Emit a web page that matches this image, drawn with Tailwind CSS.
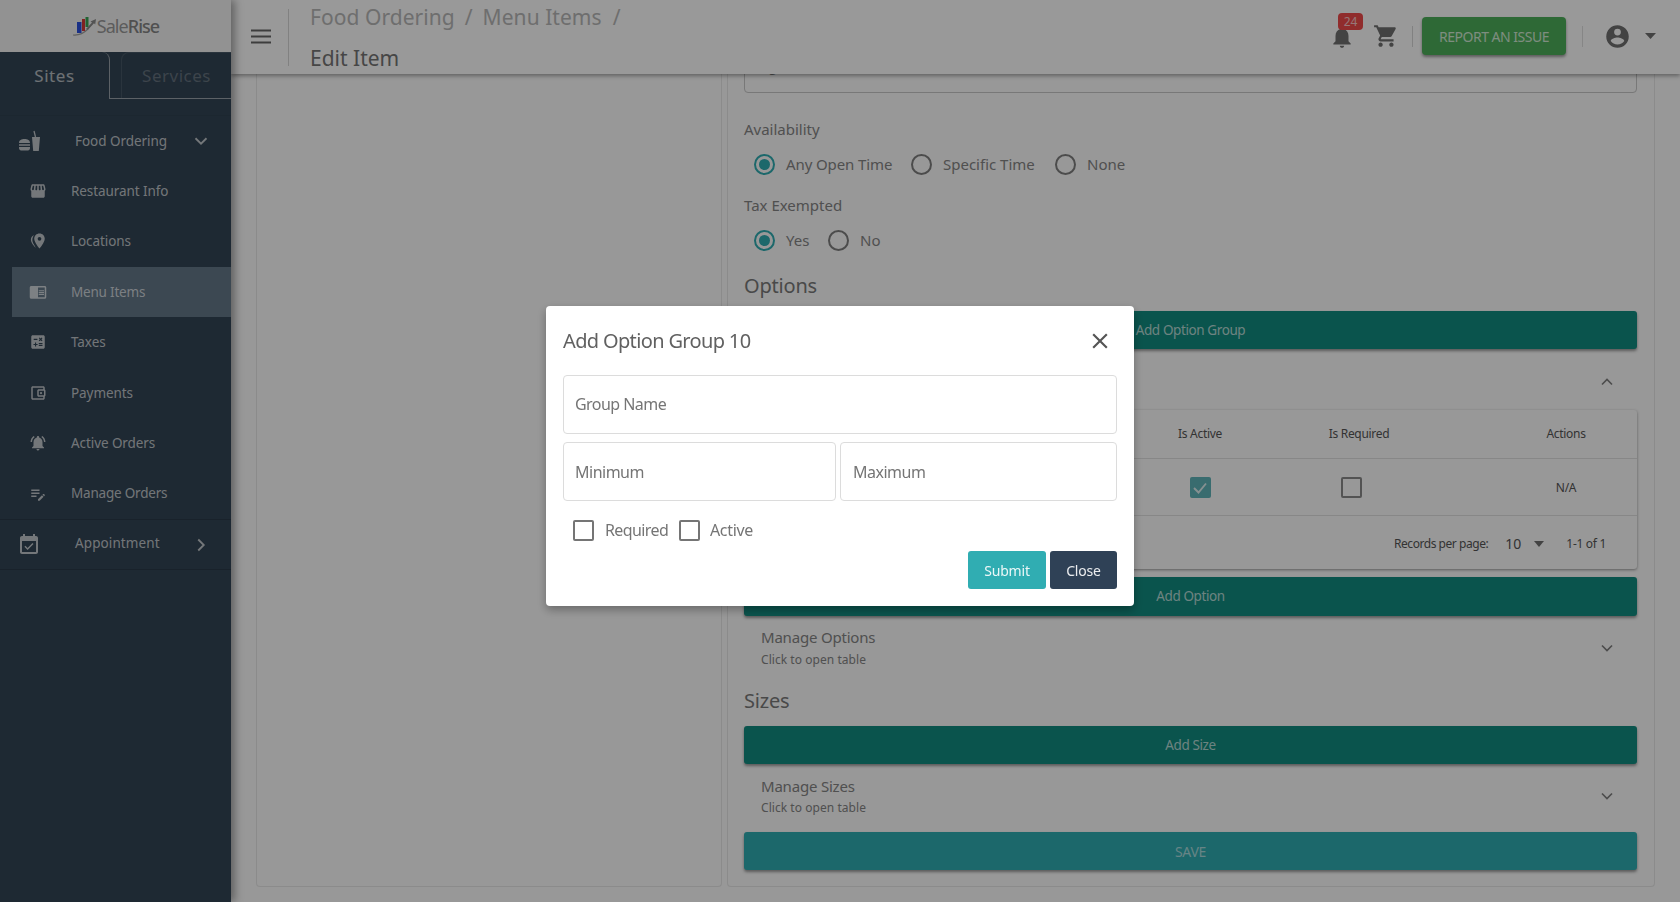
<!DOCTYPE html>
<html lang="en">
<head>
<meta charset="UTF-8">
<title>Edit Item</title>
<script src="https://cdn.jsdelivr.net/npm/@tailwindcss/browser@4"></script>
</head>
<body class="h-[902px] overflow-hidden bg-[#fdfdfd] font-['Noto_Sans',sans-serif] text-[#858585]">
<div class="flex h-[902px]">
  <!-- sidebar -->
  <aside class="relative z-20 flex w-[231px] shrink-0 flex-col bg-[#334555] text-white/70 shadow-[4px_0_8px_rgba(0,0,0,0.35)]">
    <div class="flex h-[52px] items-center justify-center bg-[#f4f4f4] pl-[1px]">
      <svg class="h-[20px] w-[24px]" viewBox="0 0 24 20">
        <path d="M0 19c5 .5 10-1 15-6" fill="none" stroke="#a0a0a0" stroke-width="1.2"/>
        <rect x="4" y="6" width="4.500" height="11" fill="#2b50e0"/>
        <rect x="9" y="3" width="3" height="12" fill="#d63a3a"/>
        <rect x="12.500" y="1" width="3" height="10" fill="#3aa655"/>
        <path d="M13 13l6-6.500-1.500-1L23 3l-.8 5.500-1.200-1.200-6 6.500z" fill="#8a8a8a"/>
      </svg>
      <span class="text-[18px] tracking-[-0.95px] text-[#999]">Sale<span class="font-medium text-[#858585]">Rise</span></span>
    </div>
    <div class="flex h-[47px] items-stretch">
      <div class="flex w-[110px] items-center justify-center rounded-tr-lg border-r border-white/50 text-[17px] tracking-[0.6px] text-white/65">Sites</div>
      <div class="flex flex-1 items-end border-b border-white/50 pl-[11px]">
        <div class="flex h-[46px] w-full items-center justify-center rounded-tl-lg border-l border-t border-white/10 text-[17px] tracking-[0.5px] text-white/25">Services</div>
      </div>
    </div>
    <div class="mt-[16px] flex h-[50.500px] items-center border-t border-black/5 text-[13.500px] tracking-[-0.05px]">
      <svg class="ml-[19px] h-[22px] w-[22px] fill-current" viewBox="0 0 22 22">
        <path d="M0 13c0-3 2.500-4 5.500-4s5.500 1 5.500 4zM0 14.200h11v1.600H0zM0 17h11v1c0 1.500-1 2.500-2 2.500H2c-1 0-2-1-2-2.500zM13 7h8l-1.200 14h-5.600z"/>
        <path d="M15 1l1.500 6" fill="none" stroke="currentColor" stroke-width="1.300"/>
      </svg>
      <span class="ml-[34px]">Food Ordering</span>
      <svg class="ml-auto mr-[19px] h-[22px] w-[22px] fill-none stroke-current stroke-2" viewBox="0 0 24 24"><path d="M6 9l6 6 6-6"/></svg>
    </div>
    <div class="flex h-[50.500px] items-center pl-[12px] text-[13.500px] tracking-[-0.08px]">
      <svg class="ml-[17px] h-[18px] w-[18px] fill-current" viewBox="0 0 24 24"><path d="M5 3h14c1 0 1.700.6 1.900 1.500l1 4.400c.3 1.200-.1 2.300-.9 3.100v7c0 1.100-.9 2-2 2H5c-1.100 0-2-.9-2-2v-7c-.8-.8-1.200-1.900-.9-3.100l1-4.400C3.300 3.600 4 3 5 3zm.1 2L4 9.400c-.1.8.4 1.600 1.200 1.600.6 0 1.200-.5 1.300-1.100L7 5H5.100zM9 5l-.5 4.500c-.1.800.5 1.500 1.300 1.500.7 0 1.200-.6 1.200-1.300V5H9zm4 0v4.700c0 .7.500 1.300 1.200 1.300.8 0 1.400-.7 1.300-1.500L15 5h-2zm4 0l.5 4.900c.1.600.7 1.100 1.300 1.100.8 0 1.300-.8 1.200-1.600L18.900 5H17z" fill-rule="evenodd"/></svg>
      <span class="ml-[24px]">Restaurant Info</span>
    </div>
    <div class="flex h-[50.500px] items-center pl-[12px] text-[13.500px] tracking-[-0.08px]">
      <svg class="ml-[17px] h-[18px] w-[18px] fill-current" viewBox="0 0 24 24"><path fill-rule="evenodd" d="M14 2c-4 0-7 3-7 7 0 5 7 13 7 13s7-8 7-13c0-4-3-7-7-7zm0 9.500a2.500 2.500 0 1 1 0-5 2.500 2.500 0 0 1 0 5z"/><path d="M6.500 4C4 5.500 2.500 7.500 2.500 10c0 3.500 3.500 8.500 6.500 11-1-2.500-5-7-4.500-11 .2-1.700.8-3.500 2-6z"/></svg>
      <span class="ml-[24px]">Locations</span>
    </div>
    <div class="ml-[12px] flex h-[50.500px] items-center bg-[#647889] text-[13.500px] tracking-[-0.2px]">
      <svg class="ml-[17px] h-[18px] w-[18px] fill-current" viewBox="0 0 24 24"><path d="M13 12h7v1.500h-7zm0-2.500h7V11h-7zm0 5h7V16h-7zM21 4H3c-1.100 0-2 .9-2 2v13c0 1.100.9 2 2 2h18c1.100 0 2-.9 2-2V6c0-1.100-.9-2-2-2zm0 15h-9V6h9v13z"/></svg>
      <span class="ml-[24px]">Menu Items</span>
    </div>
    <div class="flex h-[50.500px] items-center pl-[12px] text-[13.500px] tracking-[-0.08px]">
      <svg class="ml-[17px] h-[18px] w-[18px] fill-current" viewBox="0 0 24 24"><path d="M19 3H5c-1.100 0-2 .9-2 2v14c0 1.100.9 2 2 2h14c1.100 0 2-.9 2-2V5c0-1.100-.9-2-2-2zm-5.970 4.060L14.090 6l1.410 1.410L16.910 6l1.060 1.060-1.410 1.410 1.410 1.410-1.060 1.060-1.410-1.400-1.410 1.410-1.060-1.060 1.410-1.410-1.410-1.420zm-6.780.66h5v1.500h-5v-1.500zM11.500 16h-2v2H8v-2H6v-1.500h2v-2h1.500v2h2V16zm6.500 1.250h-5v-1.500h5v1.500zm0-2.500h-5v-1.500h5v1.500z"/></svg>
      <span class="ml-[24px]">Taxes</span>
    </div>
    <div class="flex h-[50.500px] items-center pl-[12px] text-[13.500px] tracking-[-0.08px]">
      <svg class="ml-[17px] h-[18px] w-[18px] fill-current" viewBox="0 0 24 24"><path d="M21 7.280V5c0-1.100-.9-2-2-2H5c-1.110 0-2 .9-2 2v14c0 1.100.89 2 2 2h14c1.100 0 2-.9 2-2v-2.280c.59-.35 1-.98 1-1.720V9c0-.74-.41-1.370-1-1.720zM20 9v6h-7V9h7zM5 19V5h14v2h-6c-1.100 0-2 .9-2 2v6c0 1.100.9 2 2 2h6v2H5z"/><circle cx="16" cy="12" r="1.500"/></svg>
      <span class="ml-[24px]">Payments</span>
    </div>
    <div class="flex h-[50.500px] items-center pl-[12px] text-[13.500px] tracking-[-0.08px]">
      <svg class="ml-[17px] h-[18px] w-[18px] fill-current" viewBox="0 0 24 24"><path d="M7.580 4.080L6.150 2.650C3.750 4.480 2.170 7.300 2.030 10.500h2c.15-2.650 1.510-4.970 3.550-6.420zm12.390 6.420h2c-.15-3.200-1.730-6.020-4.120-7.850l-1.420 1.430c2.020 1.450 3.390 3.770 3.540 6.420zM18 11c0-3.070-1.640-5.640-4.500-6.320V4c0-.83-.67-1.500-1.500-1.500s-1.500.67-1.500 1.500v.68C7.630 5.360 6 7.920 6 11v5l-2 2v1h16v-1l-2-2v-5zm-6 11c.14 0 .27-.01.4-.04.65-.14 1.180-.58 1.440-1.180.1-.24.15-.5.15-.78h-4c.01 1.100.9 2 2.010 2z"/></svg>
      <span class="ml-[24px]">Active Orders</span>
    </div>
    <div class="flex h-[50.500px] items-center pl-[12px] text-[13.500px] tracking-[-0.2px]">
      <svg class="ml-[17px] h-[18px] w-[18px] fill-current" viewBox="0 0 24 24"><path d="M3 10h11v2H3v-2zm0-2h11V6H3v2zm0 8h7v-2H3v2zm15.010-3.130l.71-.71c.39-.39 1.020-.39 1.410 0l.71.71c.39.39.39 1.020 0 1.410l-.71.71-2.120-2.120zm-.71.71l-5.300 5.300V21h2.120l5.300-5.300-2.120-2.120z"/></svg>
      <span class="ml-[24px] -translate-y-[1px]">Manage Orders</span>
    </div>
    <div class="flex h-[51px] items-center border-y border-black/15 text-[13.500px] tracking-[0.1px]">
      <svg class="ml-[17px] h-[24px] w-[24px] fill-current" viewBox="0 0 24 24"><path d="M16.530 11.060L15.470 10l-4.880 4.880-2.120-2.120-1.060 1.060L10.590 17l5.940-5.940zM19 3h-1V1h-2v2H8V1H6v2H5c-1.110 0-1.990.9-1.990 2L3 19c0 1.100.89 2 2 2h14c1.100 0 2-.9 2-2V5c0-1.100-.9-2-2-2zm0 16H5V8h14v11z"/></svg>
      <span class="ml-[34px] -translate-y-[1px]">Appointment</span>
      <svg class="ml-auto mr-[19px] h-[22px] w-[22px] fill-none stroke-current stroke-2" viewBox="0 0 24 24"><path d="M9 6l6 6-6 6"/></svg>
    </div>
  </aside>

  <div class="flex min-w-0 flex-1 flex-col overflow-hidden">
    <!-- top bar -->
    <header class="relative z-10 flex h-[74px] shrink-0 items-center bg-white shadow-[0_2px_4px_rgba(0,0,0,0.35)]">
      <svg class="mb-[2px] ml-[20px] h-[15px] w-[20px] fill-[#666]" viewBox="0 0 20 15"><rect y="0.500" width="20" height="2"/><rect y="6.500" width="20" height="2"/><rect y="12.500" width="20" height="2"/></svg>
      <div class="ml-[17px] h-[57px] w-px bg-[#d8d8d8]"></div>
      <div class="mb-[3px] ml-[21px] flex flex-col">
        <div class="flex h-[34px] items-center pt-[4px] text-[21px] tracking-[0.05px] text-[#b8b8b8]">
          <span>Food Ordering</span><span class="mx-[10px]">/</span><span>Menu Items</span><span class="mx-[11px]">/</span>
        </div>
        <div class="mt-[8px] h-[32px] text-[21px] leading-[34px] text-[#757575]">Edit Item</div>
      </div>
      <div class="mb-[2px] ml-auto flex items-center">
        <div class="relative h-[24px] w-[24px]">
          <svg class="h-[26px] w-[26px] fill-[#707070]" viewBox="0 0 24 24"><path d="M12 22c1.100 0 2-.9 2-2h-4c0 1.100.89 2 2 2zm6-6v-5c0-3.070-1.640-5.640-4.500-6.320V4c0-.83-.67-1.500-1.500-1.500s-1.500.67-1.500 1.500v.68C7.630 5.360 6 7.920 6 11v5l-2 2v1h16v-1l-2-2z"/></svg>
          <span class="absolute left-[9px] top-[-11px] flex h-[17px] w-[25px] items-center justify-center rounded-[4px] bg-[#f04a4a] text-[12px] text-white/70">24</span>
        </div>
        <svg class="ml-[20px] h-[26px] w-[26px] fill-[#707070]" viewBox="0 0 24 24"><path d="M7 18c-1.100 0-1.990.9-1.990 2S5.900 22 7 22s2-.9 2-2-.9-2-2-2zM1 2v2h2l3.600 7.590-1.350 2.450c-.16.28-.25.61-.25.96 0 1.100.9 2 2 2h12v-2H7.420c-.14 0-.25-.11-.25-.25l.03-.12.9-1.630h7.450c.75 0 1.410-.41 1.750-1.030l3.580-6.490c.08-.14.12-.31.12-.48 0-.55-.45-1-1-1H5.210l-.94-2H1zm16 16c-1.100 0-1.990.9-1.990 2s.89 2 1.990 2 2-.9 2-2-.9-2-2-2z"/></svg>
        <div class="ml-[13px] h-[21px] w-px bg-[#d8d8d8]"></div>
        <button class="ml-[9px] h-[38px] w-[144px] rounded-[4px] bg-[#4eb05a] text-[14px] tracking-[-0.5px] text-white/75 shadow-[0_2px_3px_rgba(0,0,0,0.4)]">REPORT AN ISSUE</button>
        <div class="ml-[16px] h-[21px] w-px bg-[#e0e0e0]"></div>
        <svg class="ml-[21px] h-[27px] w-[27px] fill-[#707070]" viewBox="0 0 24 24"><path d="M12 19.200C9.500 19.200 7.290 17.920 6 16C6.030 14 10 12.900 12 12.900C14 12.900 17.970 14 18 16C16.710 17.920 14.500 19.200 12 19.200M12 5A3 3 0 0 1 15 8A3 3 0 0 1 12 11A3 3 0 0 1 9 8A3 3 0 0 1 12 5M12 2A10 10 0 0 0 2 12A10 10 0 0 0 12 22A10 10 0 0 0 22 12C22 6.470 17.500 2 12 2Z"/></svg>
        <svg class="ml-[14px] mr-[24px] h-[6px] w-[11px] fill-[#707070]" viewBox="0 0 11 6"><path d="M0 0h11L5.500 6z"/></svg>
      </div>
    </header>

    <!-- page body -->
    <main class="flex flex-1 pl-[25px] pr-[25px]">
      <div class="h-[813px] w-[466px] rounded-b border border-t-0 border-[#e8e8e8]"></div>
      <div class="ml-[5px] h-[813px] w-[928px] rounded-b border border-t-0 border-[#e8e8e8] pl-[16px] pr-[17px]">
        <div class="-mt-[21px] h-[40px] rounded border border-[#c8c8c8] pl-[10px] pt-[2px] text-[14px] leading-[20px]">Ingredients</div>
        <div class="mt-[26px] h-[20px] text-[15px] leading-[20px]">Availability</div>
        <div class="mt-[13px] flex h-[24px] items-center pl-[10px] text-[15px]">
          <span class="flex h-[21px] w-[21px] items-center justify-center rounded-full border-2 border-[#30adb2]"><span class="h-[11px] w-[11px] rounded-full bg-[#30adb2]"></span></span>
          <span class="ml-[11px] w-[125px] tracking-[-0.1px]">Any Open Time</span>
          <span class="h-[21px] w-[21px] rounded-full border-2 border-[#7f7f7f]"></span>
          <span class="ml-[11px] w-[112px]">Specific Time</span>
          <span class="h-[21px] w-[21px] rounded-full border-2 border-[#7f7f7f]"></span>
          <span class="ml-[11px]">None</span>
        </div>
        <div class="mt-[19px] h-[20px] text-[15px] leading-[20px]">Tax Exempted</div>
        <div class="mt-[13px] flex h-[24px] items-center pl-[10px] text-[15px]">
          <span class="flex h-[21px] w-[21px] items-center justify-center rounded-full border-2 border-[#30adb2]"><span class="h-[11px] w-[11px] rounded-full bg-[#30adb2]"></span></span>
          <span class="ml-[11px] w-[42px]">Yes</span>
          <span class="h-[21px] w-[21px] rounded-full border-2 border-[#7f7f7f]"></span>
          <span class="ml-[11px]">No</span>
        </div>
        <h2 class="mt-[20px] h-[28px] text-[20px] leading-[28px] tracking-[-0.2px] text-[#7a7a7a]">Options</h2>
        <button class="mt-[11px] h-[38px] w-full rounded-[3px] bg-[#128c80] text-[13.500px] tracking-[-0.4px] text-white/70 shadow-[0_2px_3px_rgba(0,0,0,0.4)]">Add Option Group</button>
        <div class="flex h-[61px] items-center justify-end pr-[20px] pt-[4px]">
          <svg class="h-[20px] w-[20px] fill-none stroke-[#7f7f7f] stroke-2" viewBox="0 0 24 24"><path d="M6 15l6-6 6 6"/></svg>
        </div>
        <div class="h-[159px] rounded-[3px] bg-[#fdfdfd] text-[12px] tracking-[-0.3px] text-[#555] shadow-[0_1px_3px_rgba(0,0,0,0.4)]">
          <div class="grid h-[49px] grid-cols-[386px_140px_178px_47px_142px] items-center border-b border-[#e2e2e2] text-center">
            <span></span><span>Is Active</span><span>Is Required</span><span></span><span>Actions</span>
          </div>
          <div class="grid h-[57px] grid-cols-[386px_140px_178px_47px_142px] items-center border-b border-[#e2e2e2] pt-[1px] text-center">
            <span></span>
            <span class="flex h-[21px] w-[21px] items-center justify-center justify-self-center rounded-[2px] bg-[#5fb4ba]"><svg class="h-[18px] w-[18px] fill-none stroke-white/80 stroke-[2.500]" viewBox="0 0 24 24"><path d="M4 12l6 6 10-12"/></svg></span>
            <span class="h-[21px] w-[21px] justify-self-center -translate-x-[8px] rounded-[2px] border-2 border-[#8a8a8a]"></span>
            <span></span>
            <span class="pt-[1px]">N/A</span>
          </div>
          <div class="flex h-[53px] items-center justify-end pr-[31px] pt-[2px]">
            <span class="tracking-[-0.45px]">Records per page:</span>
            <span class="ml-[17px] text-[14px] tracking-normal">10</span>
            <svg class="ml-[13px] h-[6px] w-[10px] fill-[#707070]" viewBox="0 0 10 6"><path d="M0 0h10L5 6z"/></svg>
            <span class="ml-[22px]">1-1 of 1</span>
          </div>
        </div>
        <button class="mt-[8px] h-[39px] w-full rounded-[3px] bg-[#128c80] text-[13.500px] tracking-[-0.4px] text-white/70 shadow-[0_2px_3px_rgba(0,0,0,0.4)]">Add Option</button>
        <div class="flex h-[64px] items-center justify-between pl-[17px] pr-[20px]">
          <div>
            <div class="h-[22px] text-[15px] leading-[21px] tracking-[-0.2px]">Manage Options</div>
            <div class="h-[20px] pt-[1px] text-[12px] leading-[20px] tracking-[0.05px]">Click to open table</div>
          </div>
          <svg class="h-[20px] w-[20px] fill-none stroke-[#7f7f7f] stroke-2" viewBox="0 0 24 24"><path d="M6 9l6 6 6-6"/></svg>
        </div>
        <h2 class="mt-[7px] h-[28px] text-[20px] leading-[28px] tracking-[-0.2px] text-[#7a7a7a]">Sizes</h2>
        <button class="mt-[11px] h-[38px] w-full rounded-[3px] bg-[#128c80] text-[13.500px] tracking-[-0.4px] text-white/70 shadow-[0_2px_3px_rgba(0,0,0,0.4)]">Add Size</button>
        <div class="flex h-[64px] items-center justify-between pl-[17px] pr-[20px]">
          <div>
            <div class="h-[22px] text-[15px] leading-[22px] tracking-[-0.2px]">Manage Sizes</div>
            <div class="h-[20px] pt-[1px] text-[12px] leading-[20px] tracking-[0.05px]">Click to open table</div>
          </div>
          <svg class="h-[20px] w-[20px] fill-none stroke-[#7f7f7f] stroke-2" viewBox="0 0 24 24"><path d="M6 9l6 6 6-6"/></svg>
        </div>
        <button class="mt-[4px] h-[38px] w-full rounded-[3px] bg-[#30adb2] text-[14px] tracking-[-0.3px] text-white/60 shadow-[0_2px_3px_rgba(0,0,0,0.4)]">SAVE</button>
      </div>
    </main>
  </div>
</div>

<!-- dialog -->
<div class="fixed inset-0 z-50 flex items-center justify-center bg-black/40 pt-[10px]">
  <div class="flex h-[300px] w-[588px] flex-col rounded-[4px] bg-white px-[17px] shadow-[0_4px_10px_rgba(0,0,0,0.3)]">
    <div class="flex h-[69px] shrink-0 items-center justify-between">
      <h3 class="text-[20px] tracking-[-0.65px] text-[#616161]">Add Option Group 10</h3>
      <svg class="mr-[4px] h-[26px] w-[26px] fill-[#555]" viewBox="0 0 24 24"><path d="M19 6.410L17.590 5 12 10.590 6.410 5 5 6.410 10.590 12 5 17.590 6.410 19 12 13.410 17.590 19 19 17.590 13.410 12z"/></svg>
    </div>
    <input class="h-[59px] w-full shrink-0 rounded-[4px] border border-[#dcdcdc] px-[11px] pb-[2px] text-[16px] tracking-[-0.55px] placeholder:text-[#757575]" placeholder="Group Name">
    <div class="mt-[8px] flex shrink-0 gap-[4px]">
      <input class="h-[59px] w-[273px] rounded-[4px] border border-[#dcdcdc] px-[11px] text-[16px] tracking-[-0.5px] placeholder:text-[#757575]" placeholder="Minimum">
      <input class="h-[59px] w-[277px] rounded-[4px] border border-[#dcdcdc] px-[12px] text-[16px] tracking-[-0.5px] placeholder:text-[#757575]" placeholder="Maximum">
    </div>
    <div class="mt-[19px] flex h-[21px] shrink-0 items-center pl-[10px] text-[16px] tracking-[-0.35px] text-[#757575]">
      <span class="h-[21px] w-[21px] rounded-[2px] border-2 border-[#757575]"></span>
      <span class="ml-[11px] w-[74px] -translate-y-[1px] tracking-[-0.6px]">Required</span>
      <span class="h-[21px] w-[21px] rounded-[2px] border-2 border-[#757575]"></span>
      <span class="ml-[10px] -translate-y-[1px]">Active</span>
    </div>
    <div class="mt-[10px] flex shrink-0 justify-end gap-[4px]">
      <button class="h-[38px] w-[78px] rounded-[3px] bg-[#30adb2] text-[14px] tracking-[-0.2px] text-white/90">Submit</button>
      <button class="h-[38px] w-[67px] rounded-[3px] bg-[#2f4156] text-[14px] tracking-[-0.2px] text-white/90">Close</button>
    </div>
  </div>
</div>
</body>
</html>
